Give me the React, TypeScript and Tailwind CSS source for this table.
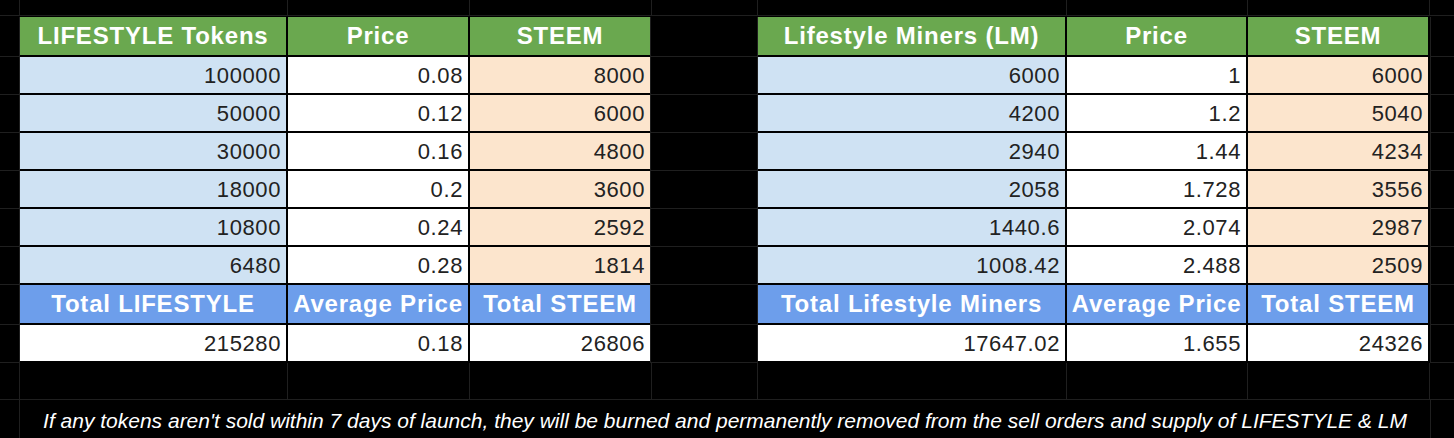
const font = "font-['Liberation_Sans',Arial,sans-serif]";

type Table = {
  cols: string;
  head: string[];
  rows: string[][];
  totalHead: string[];
  total: string[];
};

const lifestyle: Table = {
  cols: "grid-cols-[266px_180px_180px]",
  head: ["LIFESTYLE Tokens", "Price", "STEEM"],
  rows: [
    ["100000", "0.08", "8000"],
    ["50000", "0.12", "6000"],
    ["30000", "0.16", "4800"],
    ["18000", "0.2", "3600"],
    ["10800", "0.24", "2592"],
    ["6480", "0.28", "1814"],
  ],
  totalHead: ["Total LIFESTYLE", "Average Price", "Total STEEM"],
  total: ["215280", "0.18", "26806"],
};

const miners: Table = {
  cols: "grid-cols-[307px_179px_180px]",
  head: ["Lifestyle Miners (LM)", "Price", "STEEM"],
  rows: [
    ["6000", "1", "6000"],
    ["4200", "1.2", "5040"],
    ["2940", "1.44", "4234"],
    ["2058", "1.728", "3556"],
    ["1440.6", "2.074", "2987"],
    ["1008.42", "2.488", "2509"],
  ],
  totalHead: ["Total Lifestyle Miners", "Average Price", "Total STEEM"],
  total: ["17647.02", "1.655", "24326"],
};

// fill colours per column in the data rows
const dataBg = ["bg-[#cfe2f3]", "bg-white", "bg-[#fce5cd]"];

function HeadCell({ text, blue }: { text: string; blue?: boolean }) {
  return (
    <div
      className={`${blue ? "bg-[#6d9eeb]" : "bg-[#6aa84f]"} flex items-center justify-center text-white font-bold text-[24px] tracking-[0.8px] whitespace-nowrap`}
    >
      {text}
    </div>
  );
}

function NumCell({ text, bg }: { text: string; bg: string }) {
  return (
    <div className={`${bg} flex items-center justify-end pr-[5px] text-[#222] text-[22px] tracking-[0.6px]`}>
      {text}
    </div>
  );
}

function SheetTable({ t }: { t: Table }) {
  return (
    <div className={`grid ${t.cols} grid-rows-[38px_repeat(6,36px)_38px_36px] gap-[2px] bg-black`}>
      {t.head.map((h) => (
        <HeadCell key={h} text={h} />
      ))}
      {t.rows.map((r, i) =>
        r.map((v, j) => <NumCell key={`${i}-${j}`} text={v} bg={dataBg[j]} />)
      )}
      {t.totalHead.map((h) => (
        <HeadCell key={h} text={h} blue />
      ))}
      {t.total.map((v, j) => (
        <NumCell key={j} text={v} bg="bg-white" />
      ))}
    </div>
  );
}

// empty spreadsheet column next to the tables, only gridlines
function Filler({ className }: { className: string }) {
  const heights = ["h-[40px]", "h-[38px]", "h-[38px]", "h-[38px]", "h-[38px]", "h-[38px]", "h-[38px]", "h-[40px]", "h-[38px]"];
  return (
    <div className={`flex flex-col border-[#1f1f1f] ${className}`}>
      {heights.map((h, i) => (
        <div key={i} className={`${h} border-b border-[#1f1f1f]`} />
      ))}
    </div>
  );
}

const stripCols = ["w-[20px]", "w-[268px]", "w-[182px]", "w-[182px]", "w-[106px]", "w-[309px]", "w-[181px]", "w-[182px]"];

function EmptyRow({ height }: { height: string }) {
  return (
    <div className={`flex ${height}`}>
      {stripCols.map((w, i) => (
        <div key={i} className={`${w} h-full border-r border-b border-[#1f1f1f]`} />
      ))}
      <div className="flex-1 h-full border-b border-[#1f1f1f]" />
    </div>
  );
}

export default function App() {
  return (
    <div className={`w-[1454px] h-[438px] bg-black overflow-hidden ${font}`}>
      <div className="h-[17px]">
        <EmptyRow height="h-[16px]" />
      </div>

      <div className="flex">
        <Filler className="w-[20px] border-r" />
        <SheetTable t={lifestyle} />
        <Filler className="w-[108px] border-x" />
        <SheetTable t={miners} />
        <Filler className="flex-1 ml-[2px] border-l" />
      </div>

      <EmptyRow height="h-[37px]" />

      <div className="flex h-[38px]">
        <div className="w-[20px] border-r border-[#1f1f1f]" />
        <div className="flex-1 flex items-center justify-center pt-[3px] text-white italic text-[21px] whitespace-nowrap">
          If any tokens aren't sold within 7 days of launch, they will be burned and permanently removed from the sell orders and supply of LIFESTYLE &amp; LM
        </div>
        <div className="w-[24px] border-l border-[#1f1f1f]" />
      </div>
    </div>
  );
}
